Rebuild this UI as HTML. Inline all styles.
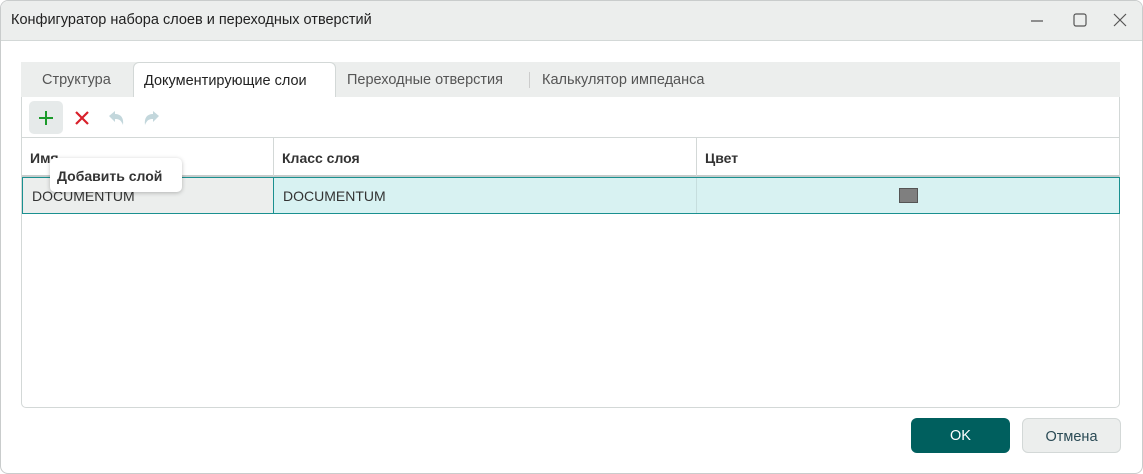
<!DOCTYPE html>
<html><head><meta charset="utf-8"><style>
*{box-sizing:border-box;margin:0;padding:0}
body{width:1143px;height:474px;background:#fff;font-family:"Liberation Sans",sans-serif;font-size:14px;color:#333;position:relative;overflow:hidden}
.win{position:absolute;left:0;top:0;width:1143px;height:474px;border:1px solid #c9cccc;border-radius:8px;overflow:hidden;background:#fff}
.title{position:absolute;left:-1px;top:-1px;width:1143px;height:41px;background:#eceeed;border-bottom:1px solid #d3d8d7}
.title span{position:absolute;left:11px;top:12px;font-size:14.5px;color:#222}
.tabs{position:absolute;left:20px;top:61px;width:1099px;height:35px;background:#eceeed}
.tab{position:absolute;top:0;height:35px;line-height:37px;font-size:14.5px;color:#555}
.tab.act{background:#fff;border:1px solid #d3d8d7;border-bottom:none;border-radius:6px 6px 0 0;color:#222;padding-left:10px}
.panel{position:absolute;left:20px;top:96px;width:1099px;height:311px;border:1px solid #d3d8d7;border-top:none;border-radius:0 0 5px 5px}
.hdr{position:absolute;left:0;top:40px;width:100%;height:40px;border-top:1px solid #d3d8d7;border-bottom:2px solid #c6cccb}
.hdr div{position:absolute;top:0;height:38px;line-height:40px;font-weight:bold;font-size:14px;color:#333;padding-left:8px}
.row{position:absolute;left:0;top:80px;width:1098px;height:37px;background:#d8f2f2;border:1px solid #1a9090}
.row div{position:absolute;top:0;height:35px;line-height:36px;padding-left:9px;font-size:14px;color:#333}
.btn{position:absolute;top:417px;width:99px;height:35px;border-radius:6px;text-align:center;line-height:36px;font-size:14.5px}
</style></head><body><div class="win">
<div class="title"><span>Конфигуратор набора слоев и переходных отверстий</span>
<svg style="position:absolute;left:1030px;top:14px" width="14" height="14"><line x1="1" y1="7" x2="13" y2="7" stroke="#555" stroke-width="1.2"/></svg>
<svg style="position:absolute;left:1073px;top:13px" width="14" height="14"><rect x="1" y="1" width="12" height="12" rx="2" fill="none" stroke="#555" stroke-width="1.2"/></svg>
<svg style="position:absolute;left:1113px;top:13px" width="14" height="14"><path d="M1 1L13 13M13 1L1 13" stroke="#555" stroke-width="1.2"/></svg>
</div>
<div class="tabs">
<div class="tab" style="left:21px">Структура</div>
<div class="tab act" style="left:112px;width:203px">Документирующие слои</div>
<div class="tab" style="left:326px">Переходные отверстия</div>
<div style="position:absolute;left:508px;top:10px;width:1px;height:16px;background:#ccc"></div>
<div class="tab" style="left:521px">Калькулятор импеданса</div>
</div>
<div class="panel">
<div style="position:absolute;left:7px;top:4px;width:34px;height:33px;background:#e6eaea;border-radius:5px"></div>
<svg style="position:absolute;left:15px;top:12px" width="18" height="18"><path d="M9 2V16M2 9H16" stroke="#1a9a2a" stroke-width="2"/></svg>
<svg style="position:absolute;left:51px;top:12px" width="18" height="18"><path d="M3 3L15 15M15 3L3 15" stroke="#d8202a" stroke-width="2.2"/></svg>
<svg style="position:absolute;left:85px;top:11px" width="20" height="20"><path d="M2 8L8 3V6C14 6 17 10 16 17C14 12 12 11 8 11V14Z" fill="#c3d7dc"/></svg>
<svg style="position:absolute;left:119px;top:11px" width="20" height="20"><path d="M18 8L12 3V6C6 6 3 10 4 17C6 12 8 11 12 11V14Z" fill="#c3d7dc"/></svg>
<div class="hdr">
<div style="left:0">Имя</div>
<div style="left:251px;border-left:1px solid #d3d8d7">Класс слоя</div>
<div style="left:674px;border-left:1px solid #d3d8d7">Цвет</div>
</div>
<div class="row">
<div style="left:0;width:250px;background:#eceeed">DOCUMENTUM</div>
<div style="left:250px;border-left:1px solid #1a9090">DOCUMENTUM</div>
<div style="left:673px;width:425px;border-left:1px solid #c6dede"></div>
<div style="position:absolute;left:876px;top:10px;width:19px;height:15px;padding:0;background:#7f7f7f;border:1px solid #555"></div>
</div>
</div>
<div style="position:absolute;left:49px;top:157px;width:132px;height:34px;background:#fff;border-radius:5px;box-shadow:0 1px 4px rgba(0,0,0,.25);font-weight:bold;font-size:14px;line-height:36px;padding-left:7px;color:#333">Добавить слой</div>
<div class="btn" style="left:910px;background:#005f5e;color:#fff">OK</div>
<div class="btn" style="left:1021px;background:#eceeed;border:1px solid #d3d8d7;color:#2a4a55">Отмена</div>
</div></body></html>
